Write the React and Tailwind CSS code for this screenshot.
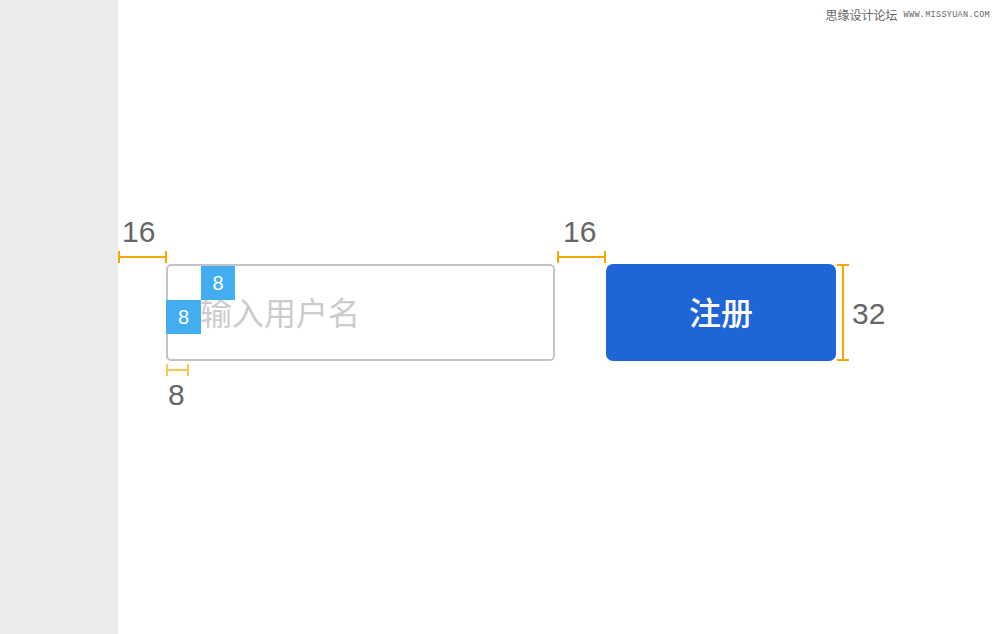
import React from 'react';

const cjk = { fontFamily: '"Noto Sans CJK SC", "Noto Sans", sans-serif' };
const num = { fontFamily: '"Liberation Sans", Arial, sans-serif' };

// horizontal dimension line with end ticks
const HLine = ({ className, light }) => (
  <div className={`absolute flex items-center ${className}`}>
    <div className={`h-[12px] w-[2px] ${light ? 'bg-[#f8c657]' : 'bg-[#f5a800]'}`} />
    <div className={`h-[2px] flex-1 ${light ? 'bg-[#f8c657]' : 'bg-[#f5a800]'}`} />
    <div className={`h-[12px] w-[2px] ${light ? 'bg-[#f8c657]' : 'bg-[#f5a800]'}`} />
  </div>
);

export default function App() {
  return (
    <div className="flex h-[634px] w-[1000px] overflow-hidden bg-white">
      <div className="h-full w-[118px] shrink-0 bg-[#ebebeb]" />

      <div className="relative flex-1">
        {/* watermark */}
        <div className="absolute right-[10px] top-[9px] flex items-center gap-[6px] text-[#666]">
          <span className="text-[12px] leading-none" style={cjk}>思缘设计论坛</span>
          <span className="text-[8.5px] leading-none tracking-[0.3px]" style={{ fontFamily: '"Liberation Mono", monospace' }}>
            WWW.MISSYUAN.COM
          </span>
        </div>

        <div className="flex pl-[48px] pt-[264px]">
          <div className="relative h-[97px] w-[389px] rounded-[5px] border-2 border-[#c4c4c4]">
            <div className="flex h-full items-center pb-[4px] pl-[32px]">
              <span className="text-[32px] leading-none text-[#cccccc]" style={cjk}>输入用户名</span>
            </div>
            <div className="absolute left-[33px] top-0 flex h-[34px] w-[34px] items-center justify-center bg-[#42adf0] text-[20px] text-white" style={num}>8</div>
            <div className="absolute left-[-2px] top-[34px] flex h-[34px] w-[35px] items-center justify-center bg-[#42adf0] text-[20px] text-white" style={num}>8</div>
          </div>

          <button className="ml-[51px] flex h-[97px] w-[230px] items-center justify-center rounded-[7px] bg-[#1f65d8] pb-[4px] text-[32px] font-medium text-white" style={cjk}>
            注册
          </button>
        </div>

        {/* annotations */}
        <span className="absolute left-[4px] top-[217px] text-[30px] leading-none text-[#666]" style={num}>16</span>
        <HLine className="left-0 top-[251px] w-[49px]" />

        <span className="absolute left-[445px] top-[217px] text-[30px] leading-none text-[#666]" style={num}>16</span>
        <HLine className="left-[439px] top-[251px] w-[49px]" />

        <HLine className="left-[48px] top-[364px] w-[23px]" light />
        <span className="absolute left-[50px] top-[380px] text-[30px] leading-none text-[#666]" style={num}>8</span>

        <div className="absolute left-[719px] top-[264px] flex h-[97px] w-[12px] flex-col items-center">
          <div className="h-[2px] w-[12px] bg-[#f5a800]" />
          <div className="w-[2px] flex-1 bg-[#f5a800]" />
          <div className="h-[2px] w-[12px] bg-[#f5a800]" />
        </div>
        <span className="absolute left-[734px] top-[299px] text-[30px] leading-none text-[#666]" style={num}>32</span>
      </div>
    </div>
  );
}
